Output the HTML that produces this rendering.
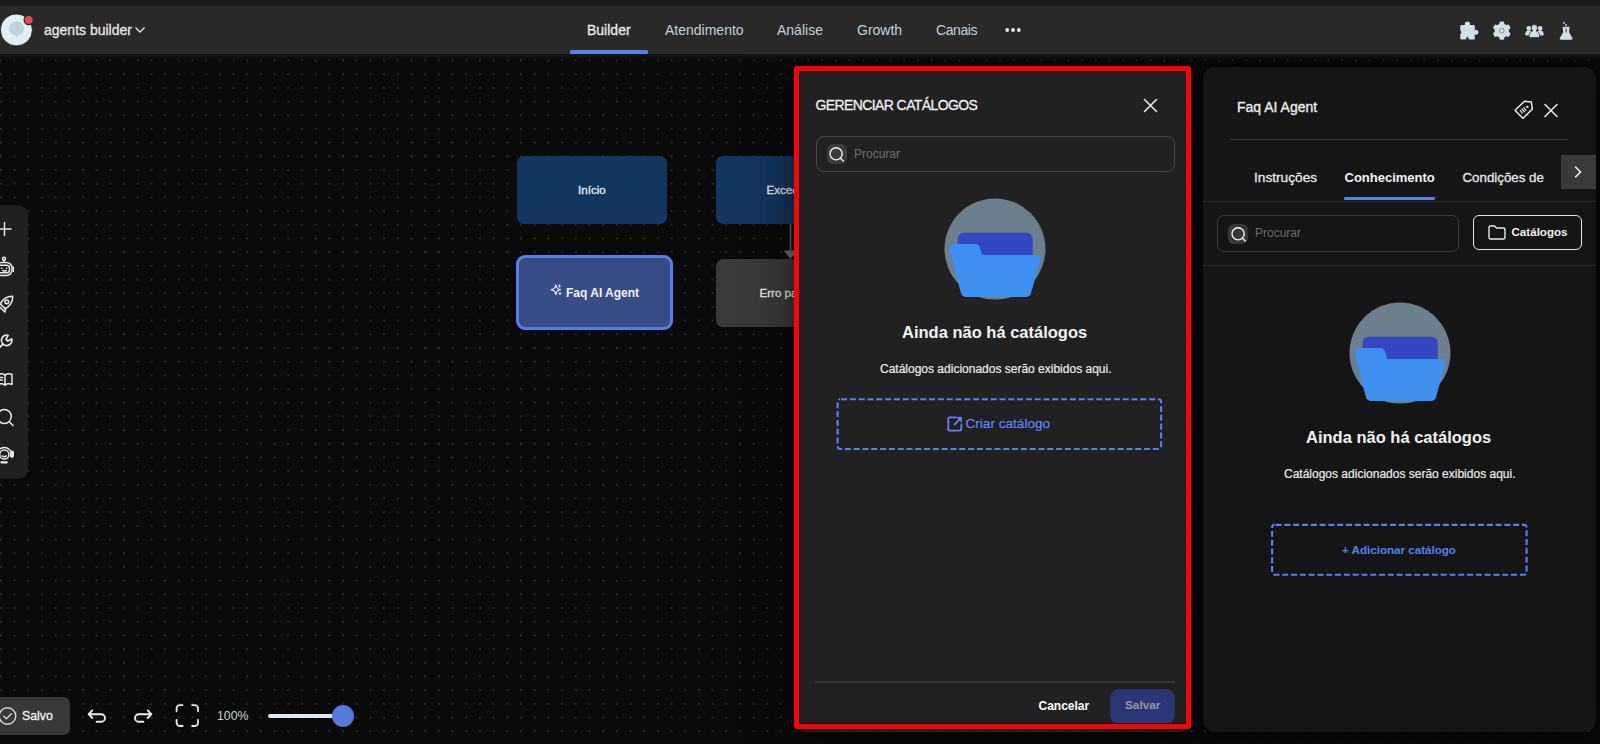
<!DOCTYPE html>
<html><head><meta charset="utf-8">
<style>
*{box-sizing:border-box;margin:0;padding:0}
html,body{width:1600px;height:744px;overflow:hidden;background:#0b0b0b;font-family:"Liberation Sans",sans-serif}
.abs{position:absolute}
#canvas{position:absolute;left:0;top:54px;width:1600px;height:690px;background-color:#0a0a0a;
 background-image:radial-gradient(circle,#292929 0.8px,transparent 1.1px);
 background-size:13.69px 13.69px;background-position:-6px -0.35px}
#topstrip{position:absolute;left:0;top:0;width:1600px;height:6px;background:#1a1a1a}
#header{position:absolute;left:0;top:6px;width:1600px;height:48px;background:#292929}
.nav{position:absolute;top:21px;font-size:14px;color:#c3d3d9;white-space:nowrap;line-height:16px}
.txt{position:absolute;white-space:nowrap;line-height:1}
</style></head><body>
<div id="canvas"></div>


<!-- nodes -->
<div class="abs" style="left:517px;top:156px;width:150px;height:68px;background:#13365f;border-radius:7px"></div>
<div class="txt" style="left:578px;top:184px;font-size:11.6px;color:#e8eef5;-webkit-text-stroke:0.3px #e8eef5">Início</div>
<div class="abs" style="left:716px;top:156px;width:150px;height:68px;background:#13365f;border-radius:7px"></div>
<div class="txt" style="left:766.5px;top:184px;font-size:11.6px;color:#e8eef5;-webkit-text-stroke:0.3px #e8eef5">Exceção</div>
<div class="abs" style="left:516px;top:255.3px;width:156.7px;height:74.4px;background:#384d88;border:3.7px solid #5a7ee8;border-radius:9px"></div>
<svg class="abs" style="left:548px;top:282px" width="16" height="16" viewBox="0 0 16 16">
 <path d="M7.8 2.8Q8.3 7.2 12.6 7.7Q8.3 8.2 7.8 12.6Q7.3 8.2 3 7.7Q7.3 7.2 7.8 2.8z" fill="none" stroke="#f2f4fa" stroke-width="1.1" stroke-linejoin="round"/>
 <path d="M11.4 2Q11.6 3.8 13.4 4Q11.6 4.2 11.4 6Q11.2 4.2 9.4 4Q11.2 3.8 11.4 2z" fill="#f2f4fa"/>
 <path d="M12 9.4Q12.2 11.2 14 11.4Q12.2 11.6 12 13.4Q11.8 11.6 10 11.4Q11.8 11.2 12 9.4z" fill="#f2f4fa"/>
</svg>
<div class="txt" style="left:566px;top:287px;font-size:12px;font-weight:700;color:#f0f2f8">Faq AI Agent</div>
<div class="abs" style="left:716px;top:259px;width:150px;height:68px;background:#3a3a3a;border-radius:7px"></div>
<div class="txt" style="left:759.5px;top:287px;font-size:11.6px;color:#e8e8e8;-webkit-text-stroke:0.3px #e8e8e8">Erro padrão</div>
<svg class="abs" style="left:780px;top:224px" width="20" height="36" viewBox="0 0 20 36"><path d="M10.5 0v30" stroke="#6e6e6e" stroke-width="1.5"/><path d="M3.5 26.5l7 8.5 7-8.5z" fill="#6e6e6e"/></svg>
<!-- left toolbar -->
<div class="abs" style="left:-12px;top:205px;width:40px;height:274px;background:#1f1f1f;border-radius:10px"></div>
<svg class="abs" style="left:0;top:205px" width="28" height="274" viewBox="0 0 28 274" fill="none" stroke="#e8e8e8" stroke-width="1.5" stroke-linecap="round" stroke-linejoin="round">
 <!-- plus -->
 <path d="M-2 24h13M4.5 17.5v13"/>
 <!-- robot -->
 <circle cx="4" cy="53.8" r="1.5"/>
 <path d="M4 55.3v2"/>
 <rect x="-4" y="57.5" width="16" height="13" rx="5.5"/>
 <rect x="-2" y="60.3" width="11.5" height="7.5" rx="2.8"/>
 <path d="M13.3 62.3v4.3"/>
 <path d="M1.5 63.3h.3M6.5 63.3h.3M2.8 65.5q1.7 1 3.4 0"/>
 <!-- rocket -->
 <path d="M12.6 91.2C7.5 91 3.2 93.6 0.2 98.8L5.3 103.9C10.4 100.9 13 96.5 12.6 91.2z"/>
 <circle cx="6.8" cy="96.8" r="1.9"/>
 <path d="M0.6 98.5L-3 99.2L1 103.5M5.6 103.5L4.9 107L0.9 103.3"/>
 <!-- wrench -->
 <path d="M8.1 130.2L6 134.3L7.8 136.1L11.8 133.9A5.3 5.3 0 1 1 8.1 130.2z" stroke-width="1.7"/>
 <path d="M3 139.1L-1.5 143.6" stroke-width="1.8"/>
 <!-- book -->
 <path d="M-2 169.5c2.2-1 4.6-1 7 .5c2.4-1.5 4.8-1.5 7-.5v10c-2.2-1-4.6-1-7 .5c-2.4-1.5-4.8-1.5-7-.5z"/>
 <path d="M5 170v10"/>
 <path d="M0 172.5h2.5M0 175h2.5"/>
 <!-- search -->
 <circle cx="4.3" cy="211.5" r="7"/>
 <path d="M9.5 217l3.5 3.5"/>
 <!-- headset -->
 <circle cx="4.3" cy="249.5" r="4.6"/>
 <path d="M-2.8 249.5a7.1 7.1 0 0 1 14.2 0"/>
 <rect x="10.6" y="246.3" width="2.6" height="5.6" rx="1" fill="#e8e8e8"/>
 <path d="M2.3 251q2 1.3 4 0"/>
 <path d="M1.3 257.3H6.8" stroke-width="2.2"/>
</svg>
<!-- bottom controls -->
<div class="abs" style="left:-10px;top:697px;width:79.5px;height:38px;background:#383838;border-radius:7px"></div>
<svg class="abs" style="left:0;top:705px" width="20" height="22" viewBox="0 0 20 22" fill="none" stroke="#d8d8d8" stroke-width="1.4" stroke-linecap="round" stroke-linejoin="round">
 <circle cx="7.5" cy="11" r="8.3"/>
 <path d="M3.8 11.2l2.6 2.6l5-5"/>
</svg>
<div class="txt" style="left:22px;top:710px;font-size:12.3px;color:#f0f0f0;-webkit-text-stroke:0.3px #f0f0f0">Salvo</div>
<svg class="abs" style="left:86px;top:704px" width="70" height="24" viewBox="0 0 70 24" fill="none" stroke="#ececec" stroke-width="1.9" stroke-linecap="round" stroke-linejoin="round">
 <path d="M6.3 6.4l-3.6 3.8l3.6 3.8M3 10.2h12.2a3.8 3.8 0 0 1 0 7.6h-4.6"/>
 <path d="M61.7 6.4l3.6 3.8l-3.6 3.8M65 10.2h-12.2a3.8 3.8 0 0 0 0 7.6h4.6"/>
</svg>
<svg class="abs" style="left:174px;top:703px" width="27" height="26" viewBox="0 0 27 26" fill="none" stroke="#e8e8e8" stroke-width="1.8" stroke-linecap="round">
 <path d="M2.6 8.3V5.4a3.3 3.3 0 0 1 3.3-3.3H8.6M18.1 2.1h2.6a3.3 3.3 0 0 1 3.3 3.3v2.9M24 16.8v2.9a3.3 3.3 0 0 1-3.3 3.3h-2.6M8.6 23H5.9a3.3 3.3 0 0 1-3.3-3.3v-2.9"/>
</svg>
<div class="txt" style="left:217px;top:710px;font-size:12.3px;color:#c3d3d8">100%</div>
<div class="abs" style="left:267.5px;top:714px;width:70px;height:4px;background:#dde4f5;border-radius:2px"></div>
<div class="abs" style="left:332px;top:705px;width:22px;height:22px;background:#5679dc;border-radius:50%"></div>

<!-- modal -->
<div class="abs" style="left:797px;top:67px;width:391px;height:665px;border-radius:8px;box-shadow:0 0 45px 4px rgba(0,0,0,0.55)"></div>
<div class="abs" style="left:1203px;top:67px;width:393px;height:665px;border-radius:12px;box-shadow:0 0 30px 4px rgba(0,0,0,0.6)"></div>

<div class="abs" style="left:797px;top:67px;width:391px;height:665px;background:#212121;border-radius:8px"></div>
<div class="txt" style="left:815.5px;top:98px;font-size:14px;color:#f0f0f0;letter-spacing:-0.6px;-webkit-text-stroke:0.3px #f0f0f0">GERENCIAR CATÁLOGOS</div>
<svg class="abs" style="left:1143px;top:98px" width="15" height="15" viewBox="0 0 15 15"><path d="M1.5 1.5l12 12M13.5 1.5l-12 12" stroke="#e8e8e8" stroke-width="1.6" stroke-linecap="round"/></svg>
<div class="abs" style="left:815.5px;top:136px;width:359.5px;height:36px;border:1px solid #474747;border-radius:8px"></div>
<div class="abs" style="left:826.5px;top:143.8px;width:20px;height:20px;background:#3b3b3b;border-radius:6px"></div>
<svg class="abs" style="left:826px;top:143.5px" width="21" height="21" viewBox="0 0 21 21" fill="none" stroke="#f2f2f2" stroke-width="1.4" stroke-linecap="round"><circle cx="10.1" cy="9.8" r="6.1"/><path d="M14.5 14.3l2.8 2.8"/></svg>
<div class="txt" style="left:854px;top:147.5px;font-size:12px;color:#6f6f6f">Procurar</div>
<svg class="abs" style="left:944px;top:198px" width="102" height="102" viewBox="0 0 102 102">
 <circle cx="51" cy="51" r="50.5" fill="#6b7f8c"/>
 <rect x="13.7" y="34.7" width="75" height="40" rx="6" fill="#3347c0"/>
 <path d="M6 51c0-3 1.5-5 4.5-5h21c2.5 0 3.8 1.2 4.5 3.5l1.6 5.5c.4 1.4 1.2 2 2.6 2h52.5c2.8 0 4.5 2 3.8 4.8l-9.5 33.5c-.8 2.5-2.5 3.7-5 3.7H22c-2.5 0-4.2-1.2-5-3.7L6.3 54.5z" fill="#3d8ff0"/>
</svg>
<div class="txt" style="left:902px;top:324px;font-size:16.5px;font-weight:700;color:#f2f2f2">Ainda não há catálogos</div>
<div class="txt" style="left:880px;top:363px;font-size:12px;color:#ececec;-webkit-text-stroke:0.2px #ececec">Catálogos adicionados serão exibidos aqui.</div>
<svg class="abs" style="left:834px;top:396px" width="332" height="58"><rect x="3.6" y="3.3" width="323.5" height="49.7" rx="2.5" fill="none" stroke="#5b7ff0" stroke-width="2.1" stroke-dasharray="6 2.8" stroke-dashoffset="-1"/></svg>
<svg class="abs" style="left:946px;top:414.5px" width="18" height="18" viewBox="0 0 18 18" fill="none" stroke="#5f84f8" stroke-width="1.8" stroke-linecap="round" stroke-linejoin="round"><path d="M9.5 2.4H3.6A1.3 1.3 0 0 0 2.3 3.7v10.6A1.3 1.3 0 0 0 3.6 15.6h10.4A1.3 1.3 0 0 0 15.3 14.3V9.4"/><path d="M8.6 9.4L14.2 3.8"/><path d="M11 2.3h4.4v4.4z" fill="#5f84f8" stroke-width="1"/></svg>
<div class="txt" style="left:965.5px;top:417px;font-size:13.6px;color:#6186f6;-webkit-text-stroke:0.2px #6186f6">Criar catálogo</div>
<div class="abs" style="left:815px;top:681px;width:360px;height:2px;background:#333333"></div>
<div class="txt" style="left:1038.5px;top:699.5px;font-size:12px;font-weight:700;color:#ffffff">Cancelar</div>
<div class="abs" style="left:1110.3px;top:689px;width:64.7px;height:34.5px;background:#2b3674;border-radius:9px"></div>
<div class="txt" style="left:1125px;top:699.5px;font-size:11.8px;font-weight:700;color:#9598aa">Salvar</div>
<!-- red annotation -->
<div class="abs" style="left:794px;top:66px;width:397px;height:663px;border:5px solid #ff0000;border-radius:3px"></div>
<div class="abs" style="left:799px;top:71px;width:387px;height:653px;border:1px solid #0f1c1c"></div>

<!-- right panel -->
<div class="abs" style="left:1203px;top:67px;width:393px;height:665px;background:#151515;border-radius:12px"></div>
<div class="txt" style="left:1237px;top:100px;font-size:14px;color:#ececec;-webkit-text-stroke:0.35px #ececec">Faq AI Agent</div>
<svg class="abs" style="left:1513px;top:99px" width="22" height="22" viewBox="0 0 22 22" fill="none" stroke="#ececec" stroke-width="1.5" stroke-linejoin="round" stroke-linecap="round"><path d="M11.5 2.3L18.3 3L19.4 10L10.6 18.8Q10 19.4 9.4 18.8L2.6 12Q2 11.4 2.6 10.8z"/><circle cx="14.2" cy="7.9" r="0.7" fill="#ececec" stroke-width="1"/><path d="M7.3 11.4l2 2.4M9.1 10l2.3 2.8M10.9 8.6l2 2.8" stroke-width="1.2"/></svg>
<svg class="abs" style="left:1543px;top:103px" width="15" height="15" viewBox="0 0 15 15"><path d="M2 1.5l12 12M14 1.5l-12 12" stroke="#e8e8e8" stroke-width="1.6" stroke-linecap="round"/></svg>
<div class="abs" style="left:1230px;top:138.5px;width:338px;height:1.5px;background:#3a3a3a"></div>
<div class="txt" style="left:1254px;top:171px;font-size:13.7px;color:#e8e8e8;-webkit-text-stroke:0.3px #e8e8e8">Instruções</div>
<div class="txt" style="left:1344.5px;top:171px;font-size:13px;font-weight:700;color:#f4f4f4">Conhecimento</div>
<div class="txt" style="left:1462.5px;top:171px;font-size:13.3px;color:#e8e8e8;-webkit-text-stroke:0.3px #e8e8e8">Condições de</div>
<div class="abs" style="left:1203px;top:201px;width:393px;height:1px;background:#2a2a2a"></div>
<div class="abs" style="left:1344px;top:196.5px;width:91px;height:3px;background:#5b7fe6;border-radius:1px"></div>
<div class="abs" style="left:1561px;top:154.5px;width:35px;height:34.5px;background:#3a3a3a"></div>
<svg class="abs" style="left:1572px;top:165px" width="12" height="14" viewBox="0 0 12 14"><path d="M3.5 2l5 5-5 5" fill="none" stroke="#f0f0f0" stroke-width="1.6" stroke-linecap="round"/></svg>
<div class="abs" style="left:1216.5px;top:215px;width:242px;height:36.5px;border:1px solid #3a3a3a;border-radius:7px"></div>
<div class="abs" style="left:1227.8px;top:223.5px;width:20.4px;height:20px;background:#383838;border-radius:6px"></div>
<svg class="abs" style="left:1228px;top:223.5px" width="21" height="21" viewBox="0 0 21 21" fill="none" stroke="#f2f2f2" stroke-width="1.4" stroke-linecap="round"><circle cx="10.1" cy="9.8" r="6.1"/><path d="M14.5 14.3l2.8 2.8"/></svg>
<div class="txt" style="left:1255px;top:227px;font-size:12px;color:#6a6a6a">Procurar</div>
<div class="abs" style="left:1472.5px;top:215px;width:109.5px;height:35px;border:1.5px solid #e6e6e6;border-radius:6px"></div>
<svg class="abs" style="left:1487px;top:223px" width="20" height="19" viewBox="0 0 20 19" fill="none" stroke="#e8e8e8" stroke-width="1.4" stroke-linejoin="round"><path d="M2 4.5A1.5 1.5 0 0 1 3.5 3h4l2 2h7A1.5 1.5 0 0 1 18 6.5v8a1.5 1.5 0 0 1-1.5 1.5h-13A1.5 1.5 0 0 1 2 14.5z"/></svg>
<div class="txt" style="left:1511.5px;top:226px;font-size:11.6px;font-weight:700;color:#f2f2f2">Catálogos</div>
<div class="abs" style="left:1203px;top:264.5px;width:393px;height:1px;background:#2a2a2a"></div>
<svg class="abs" style="left:1349px;top:302px" width="102" height="102" viewBox="0 0 102 102">
 <circle cx="51" cy="51" r="50.5" fill="#6b7f8c"/>
 <rect x="13.7" y="34.7" width="75" height="40" rx="6" fill="#3347c0"/>
 <path d="M6 51c0-3 1.5-5 4.5-5h21c2.5 0 3.8 1.2 4.5 3.5l1.6 5.5c.4 1.4 1.2 2 2.6 2h52.5c2.8 0 4.5 2 3.8 4.8l-9.5 33.5c-.8 2.5-2.5 3.7-5 3.7H22c-2.5 0-4.2-1.2-5-3.7L6.3 54.5z" fill="#3d8ff0"/>
</svg>
<div class="txt" style="left:1306px;top:429px;font-size:16.5px;font-weight:700;color:#f2f2f2">Ainda não há catálogos</div>
<div class="txt" style="left:1284px;top:468px;font-size:12px;color:#ececec;-webkit-text-stroke:0.2px #ececec">Catálogos adicionados serão exibidos aqui.</div>
<svg class="abs" style="left:1268px;top:521px" width="264" height="58"><rect x="4.1" y="3.9" width="254.5" height="49.8" rx="2.5" fill="none" stroke="#5b7ff0" stroke-width="2.1" stroke-dasharray="6 2.8" stroke-dashoffset="-1"/></svg>
<div class="txt" style="left:1342px;top:544px;font-size:11.6px;font-weight:700;color:#5b7ef4">+ Adicionar catálogo</div>
<div class="abs" style="left:0;top:54px;width:1600px;height:6px;background:linear-gradient(#15171b,rgba(11,11,11,0))"></div>
<div id="topstrip"></div>
<div id="header">
 <svg class="abs" style="left:0;top:0px" width="40" height="48" viewBox="0 0 40 48">
  <circle cx="16.4" cy="23.9" r="16" fill="#e1eef3" stroke="#111" stroke-width="0.8"/>
  <path d="M9 22.5c0-4.2 3.3-7 7.5-7s7.5 2.8 7.5 7c0 3.8-2.8 6.5-6.3 6.9l-1 2.4l-1.3-2.5c-3.7-.5-6.4-3.1-6.4-6.8z" fill="#bfd2dd"/>
  <circle cx="28.7" cy="14" r="4.6" fill="#f04848" stroke="#1d2a33" stroke-width="1.2"/>
 </svg>
 <div class="txt" style="left:44px;top:17px;font-size:14px;color:#e6e6e6;-webkit-text-stroke:0.3px #e6e6e6">agents builder</div>
 <svg class="abs" style="left:134px;top:20px" width="12" height="8" viewBox="0 0 12 8"><path d="M1.5 1.5l4.5 4.5l4.5-4.5" fill="none" stroke="#e0e0e0" stroke-width="1.4"/></svg>
 <div class="txt" style="left:587px;top:17px;font-size:14px;color:#ececec;-webkit-text-stroke:0.3px #ececec">Builder</div>
 <div class="abs" style="left:570px;top:44px;width:78px;height:4px;background:#5a7fe4;border-radius:1px"></div>
 <div class="txt" style="left:665px;top:17px;font-size:14px;color:#c3d3d8">Atendimento</div>
 <div class="txt" style="left:777px;top:17px;font-size:14px;color:#c3d3d8">Análise</div>
 <div class="txt" style="left:857px;top:17px;font-size:14px;color:#c3d3d8">Growth</div>
 <div class="txt" style="left:936px;top:17px;font-size:14px;color:#c3d3d8;letter-spacing:-0.4px">Canais</div>
 <svg class="abs" style="left:1005px;top:21px" width="16" height="6" viewBox="0 0 16 6"><circle cx="2.2" cy="3" r="1.9" fill="#e8e8e8"/><circle cx="8" cy="3" r="1.9" fill="#e8e8e8"/><circle cx="13.8" cy="3" r="1.9" fill="#e8e8e8"/></svg>
 <!-- right icons -->
 <svg class="abs" style="left:1455px;top:11px" width="60" height="28" viewBox="0 0 60 28">
  <g fill="#cfe0e6">
   <rect x="5.3" y="8.1" width="14.5" height="14.5" rx="1"/>
   <circle cx="12.4" cy="7" r="2.6"/>
   <circle cx="20.9" cy="15.2" r="2.5"/>
  </g>
  <circle cx="4.6" cy="15.2" r="1.7" fill="#292929"/>
  <path d="M10.4 22.8L12.4 19.2L14.4 22.8z" fill="#292929"/>
  <circle cx="46.8" cy="13.7" r="7.2" fill="#cfe0e6"/>
  <rect x="44.40" y="4.60" width="4.8" height="6" rx="1.3" transform="rotate(-60 46.8 13.7)" fill="#cfe0e6"/><rect x="44.40" y="4.60" width="4.8" height="6" rx="1.3" transform="rotate(0 46.8 13.7)" fill="#cfe0e6"/><rect x="44.40" y="4.60" width="4.8" height="6" rx="1.3" transform="rotate(60 46.8 13.7)" fill="#cfe0e6"/><rect x="44.40" y="4.60" width="4.8" height="6" rx="1.3" transform="rotate(120 46.8 13.7)" fill="#cfe0e6"/><rect x="44.40" y="4.60" width="4.8" height="6" rx="1.3" transform="rotate(180 46.8 13.7)" fill="#cfe0e6"/><rect x="44.40" y="4.60" width="4.8" height="6" rx="1.3" transform="rotate(240 46.8 13.7)" fill="#cfe0e6"/>
  <circle cx="46.8" cy="13.7" r="2.3" fill="none" stroke="#6f7a7e" stroke-width="0.8"/>
 </svg>
 <svg class="abs" style="left:1520px;top:11px" width="60" height="28" viewBox="0 0 60 28">
  <g fill="#cfe0e6">
   <circle cx="8.8" cy="11.2" r="2.3"/>
   <circle cx="20.1" cy="11.2" r="2.3"/>
   <path d="M5.2 17.4c0-2.6 1.6-4.2 3.6-4.2s3.6 1.6 3.6 4.2c0 .8-.6 1.1-1.3 1.1H6.5c-.7 0-1.3-.3-1.3-1.1z"/>
   <path d="M16.5 17.4c0-2.6 1.6-4.2 3.6-4.2s3.6 1.6 3.6 4.2c0 .8-.6 1.1-1.3 1.1h-4.6c-.7 0-1.3-.3-1.3-1.1z"/>
  </g>
  <g fill="#cfe0e6" stroke="#2a2a2a" stroke-width="0.8">
   <path d="M14.4 7.6a3.1 3.1 0 0 1 3.1 3.2c0 1.3-.6 2.4-1.5 3c2.2.6 3.6 2.6 3.6 5.2c0 1-.7 1.6-1.7 1.6h-7c-1 0-1.7-.6-1.7-1.6c0-2.6 1.4-4.6 3.6-5.2c-.9-.6-1.5-1.7-1.5-3a3.1 3.1 0 0 1 3.1-3.2z"/>
  </g>
  <path d="M42.6 9.8H49.6L49.1 15.2L52.4 21C52.9 22 52.3 22.7 51.2 22.7H41.1C40 22.7 39.4 22 39.9 21L43.2 15.2z" fill="#cfe0e6"/>
  <rect x="45.6" y="11.6" width="1" height="3.9" fill="#3c4446"/>
  <circle cx="44" cy="6" r="0.95" fill="#cfe0e6"/><circle cx="46.1" cy="7.9" r="0.95" fill="#cfe0e6"/>
 </svg>
</div>
</body></html>
